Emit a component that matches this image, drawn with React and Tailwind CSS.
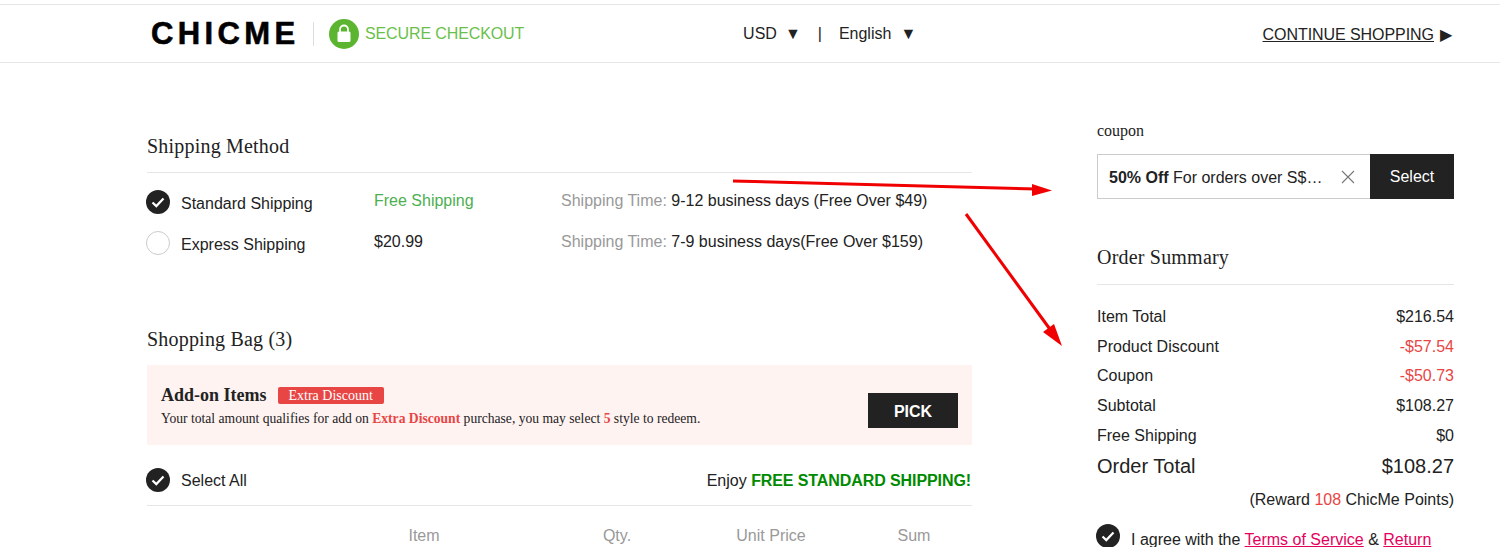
const CheckCircle = () => (
  <svg width="24" height="24" viewBox="0 0 24 24" className="shrink-0">
    <circle cx="12" cy="12" r="12" fill="#222" />
    <path d="M6.5 12.5l3.8 3.6 7.2-7.6" fill="none" stroke="#fff" strokeWidth="2.2" />
  </svg>
);

const summaryRows = [
  { label: "Item Total", value: "$216.54" },
  { label: "Product Discount", value: "-$57.54", red: true },
  { label: "Coupon", value: "-$50.73", red: true },
  { label: "Subtotal", value: "$108.27" },
  { label: "Free Shipping", value: "$0" },
];

const Header = () => (
  <div className="pt-[4px]">
    <header className="h-[59px] border-t border-b border-[#e6e6e6] flex items-center relative">
      {/* Logo */}
      <div className="ml-[151px] w-[146px] text-[31px] leading-none font-bold tracking-[4.4px] whitespace-nowrap text-black [-webkit-text-stroke:0.6px_black] font-['Liberation_Sans',sans-serif]">
        CHICME
      </div>
      <div className="ml-[16px] w-[1px] h-[24px] bg-[#ddd]"></div>
      <svg width="30" height="30" viewBox="0 0 30 30" className="ml-[15px]">
        <circle cx="15" cy="15" r="15" fill="#5cb531" />
        <path d="M11 13v-2.5a4 4 0 0 1 8 0V13" fill="none" stroke="#fff" strokeWidth="1.8" />
        <rect x="8.5" y="12.5" width="13" height="10.5" rx="1.5" fill="#fff" />
      </svg>
      <span className="ml-[6px] tracking-[-0.12px] text-[#6abf4b]">SECURE CHECKOUT</span>

      {/* Currency / language */}
      <div className="ml-[219px] flex items-center">
        <span>USD</span>
        <span className="ml-[8px] text-[16px] leading-none">▼</span>
        <span className="ml-[17px]">|</span>
        <span className="ml-[17px]">English</span>
        <span className="ml-[9px] text-[16px] leading-none">▼</span>
      </div>

      <div className="ml-auto mr-[48px] mt-[2px] flex items-center">
        <span className="underline tracking-[-0.06px]">CONTINUE SHOPPING</span>
        <span className="ml-[6px] text-[16px] leading-none">▶</span>
      </div>
    </header>
  </div>
);

const ShippingRow = ({ checked, name, price, green, time }) => (
  <div className="h-[41px] -ml-[1px] flex items-center">
    {checked ? (
      <CheckCircle />
    ) : (
      <span className="w-[24px] h-[24px] rounded-full border border-[#ccc] shrink-0"></span>
    )}
    <span className="ml-[11px] w-[193px] mt-[4px]">{name}</span>
    <span className={`w-[187px] -mt-[2px] ${green ? "text-[#4caf50]" : ""}`}>{price}</span>
    <span className="-mt-[2px]">
      <span className="text-[#999]">Shipping Time: </span>
      {time}
    </span>
  </div>
);

const Left = () => (
  <div className="w-[825px] ml-[147px] pt-[68px]">
    <h2 className="h-[42px] leading-[30px] text-[20px] tracking-[0.2px] border-b border-[#e6e6e6] font-['Liberation_Serif',serif]">
      Shipping Method
    </h2>
    <div className="mt-[8px]">
      <ShippingRow checked name="Standard Shipping" price="Free Shipping" green time="9-12 business days (Free Over $49)" />
      <ShippingRow name="Express Shipping" price="$20.99" time="7-9 business days(Free Over $159)" />
    </div>

    <h2 className="mt-[61px] leading-[30px] text-[20px] tracking-[0.2px] font-['Liberation_Serif',serif]">
      Shopping Bag (3)
    </h2>

    {/* Add-on banner */}
    <div className="mt-[11px] h-[80px] bg-[#fff3f2] px-[14px] flex items-center justify-between font-['Liberation_Serif',serif]">
      <div className="mt-[6px]">
        <div className="flex items-center h-[22px]">
          <span className="text-[18px] font-bold">Add-on Items</span>
          <span className="ml-[11px] h-[17px] px-[11px] rounded-[2px] bg-[#e84545] text-white text-[14px] leading-[17px]">
            Extra Discount
          </span>
        </div>
        <p className="text-[13.6px] leading-[26px]">
          Your total amount qualifies for add on{" "}
          <b className="text-[#e84545]">Extra Discount</b> purchase, you may select{" "}
          <b className="text-[#e84545]">5</b> style to redeem.
        </p>
      </div>
      <button className="w-[90px] h-[35px] mt-[10px] pt-[3px] bg-[#222] text-white font-bold font-['Liberation_Sans',sans-serif]">
        PICK
      </button>
    </div>

    <div className="h-[61px] pt-[9px] flex items-center justify-between border-b border-[#e6e6e6]">
      <div className="flex items-center -ml-[1px]">
        <CheckCircle />
        <span className="ml-[11px] mt-[2px]">Select All</span>
      </div>
      <div className="mr-[1px] mt-[2px]">
        Enjoy <b className="tracking-[-0.09px] text-[#008a00]">FREE STANDARD SHIPPING!</b>
      </div>
    </div>

    <div className="mt-[18px] pl-[153px] grid grid-cols-[248px_138px_170px_116px] text-center text-[#999]">
      <span>Item</span>
      <span>Qty.</span>
      <span>Unit Price</span>
      <span>Sum</span>
    </div>
  </div>
);

const Right = () => (
  <div className="w-[357px] ml-[125px] pt-[58px]">
    <div className="text-[16px] leading-[20px] font-['Liberation_Serif',serif]">coupon</div>
    <div className="mt-[13px] h-[45px] flex">
      <div className="w-[273px] border border-[#ccc] border-r-0 flex items-center pl-[11px]">
        <span className="w-[219px] mt-[3px] whitespace-nowrap">
          <b>50% Off</b> For orders over S$…
        </span>
        <svg width="14" height="14" viewBox="0 0 14 14" className="ml-[13px] mt-[1px]">
          <path d="M1 1l12 12M13 1L1 13" stroke="#777" strokeWidth="1.1" />
        </svg>
      </div>
      <button className="w-[84px] bg-[#222] text-white">
        <span className="block mt-[1px]">Select</span>
      </button>
    </div>

    <h2 className="mt-[43px] h-[43px] leading-[30px] text-[20px] tracking-[0.2px] border-b border-[#e6e6e6] font-['Liberation_Serif',serif]">
      Order Summary
    </h2>

    <div className="mt-[17px]">
      {summaryRows.map((row) => (
        <div key={row.label} className="flex justify-between leading-[29.7px]">
          <span>{row.label}</span>
          <span className={row.red ? "text-[#e84545]" : ""}>{row.value}</span>
        </div>
      ))}
    </div>
    <div className="flex justify-between text-[20px] leading-[31px]">
      <span>Order Total</span>
      <span>$108.27</span>
    </div>
    <div className="text-right leading-[35px]">
      (Reward <span className="text-[#e84545]">108</span> ChicMe Points)
    </div>
    <div className="mt-[7px] -ml-[1px] flex items-start">
      <CheckCircle />
      <span className="ml-[11px] mt-[4px] whitespace-nowrap">
        I agree with the <span className="underline text-[#e5005c]">Terms of Service</span> &{" "}
        <span className="underline text-[#e5005c]">Return</span>
      </span>
    </div>
  </div>
);

export default function App() {
  return (
    <div className="relative w-[1500px] h-[547px] overflow-hidden bg-white text-[16px] text-[#222] font-['Liberation_Sans',sans-serif]">
      <Header />
      <div className="flex">
        <Left />
        <Right />
      </div>

      {/* Red annotation arrows drawn over the page */}
      <svg width="1500" height="547" className="absolute inset-0 pointer-events-none">
        <path d="M733 181L1036 189" stroke="#f00000" strokeWidth="3" fill="none" />
        <path d="M1052 190.5L1032 184L1032 196Z" fill="#f00000" />
        <path d="M966 214L1052 332" stroke="#f00000" strokeWidth="3" fill="none" />
        <path d="M1062 346L1043 332L1054 324Z" fill="#f00000" />
      </svg>
    </div>
  );
}
